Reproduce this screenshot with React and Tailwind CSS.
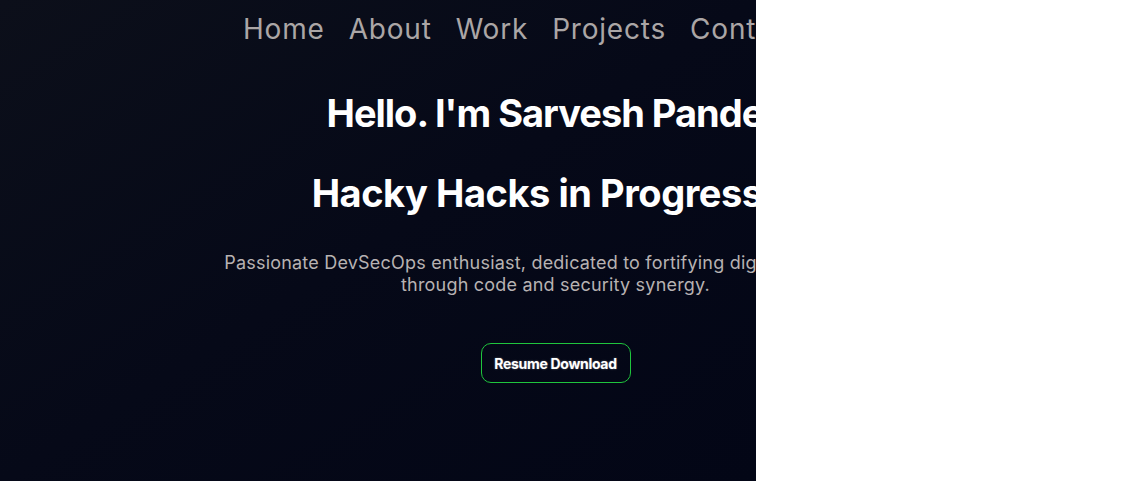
import React from 'react';

const links = ['Home', 'About', 'Work', 'Projects', 'Contact'];

const App = () => {
    return (
        <div className="w-[1135px] h-[481px] bg-white flex" style={{ fontFamily: 'Inter, "Noto Sans", sans-serif' }}>
            {/* Hero panel: content is wider than the panel and gets clipped */}
            <div className="w-[756px] h-full overflow-hidden bg-gradient-to-br from-[#0c0f1a] via-[#060918] to-[#030616]">
                <div className="w-[1111px] flex flex-col items-center">
                    <nav className="self-start ml-[243px] flex items-center gap-[24px] pt-[9px] h-[48px]">
                        {links.map((l) => (
                            <a key={l} className="text-[28px] leading-[38px] text-[#aba6a6] font-normal tracking-[0.8px]">
                                {l}
                            </a>
                        ))}
                    </nav>

                    <h1 className="mt-[41px] text-[38px] leading-[48px] font-bold text-white tracking-[-1px]">
                        Hello. I'm Sarvesh Pandey
                    </h1>
                    <h2 className="mt-[32px] text-[38px] leading-[48px] font-bold text-white tracking-[-0.45px]">
                        Hacky Hacks in Progress...
                    </h2>

                    <p className="mt-[35px] max-w-[680px] text-center text-[18px] leading-[22px] text-[#b7b2b2] tracking-[0.2px]">
                        Passionate DevSecOps enthusiast, dedicated to fortifying digital landscapes through code and security synergy.
                    </p>

                    <button className="mt-[47px] w-[150px] h-[40px] rounded-[10px] border border-[#1fc53d] text-white text-[14px] font-bold tracking-[-0.3px] [text-shadow:0_0_2px_rgba(255,255,255,0.4)]">
                        Resume Download
                    </button>
                </div>
            </div>
        </div>
    );
};

export default App;
